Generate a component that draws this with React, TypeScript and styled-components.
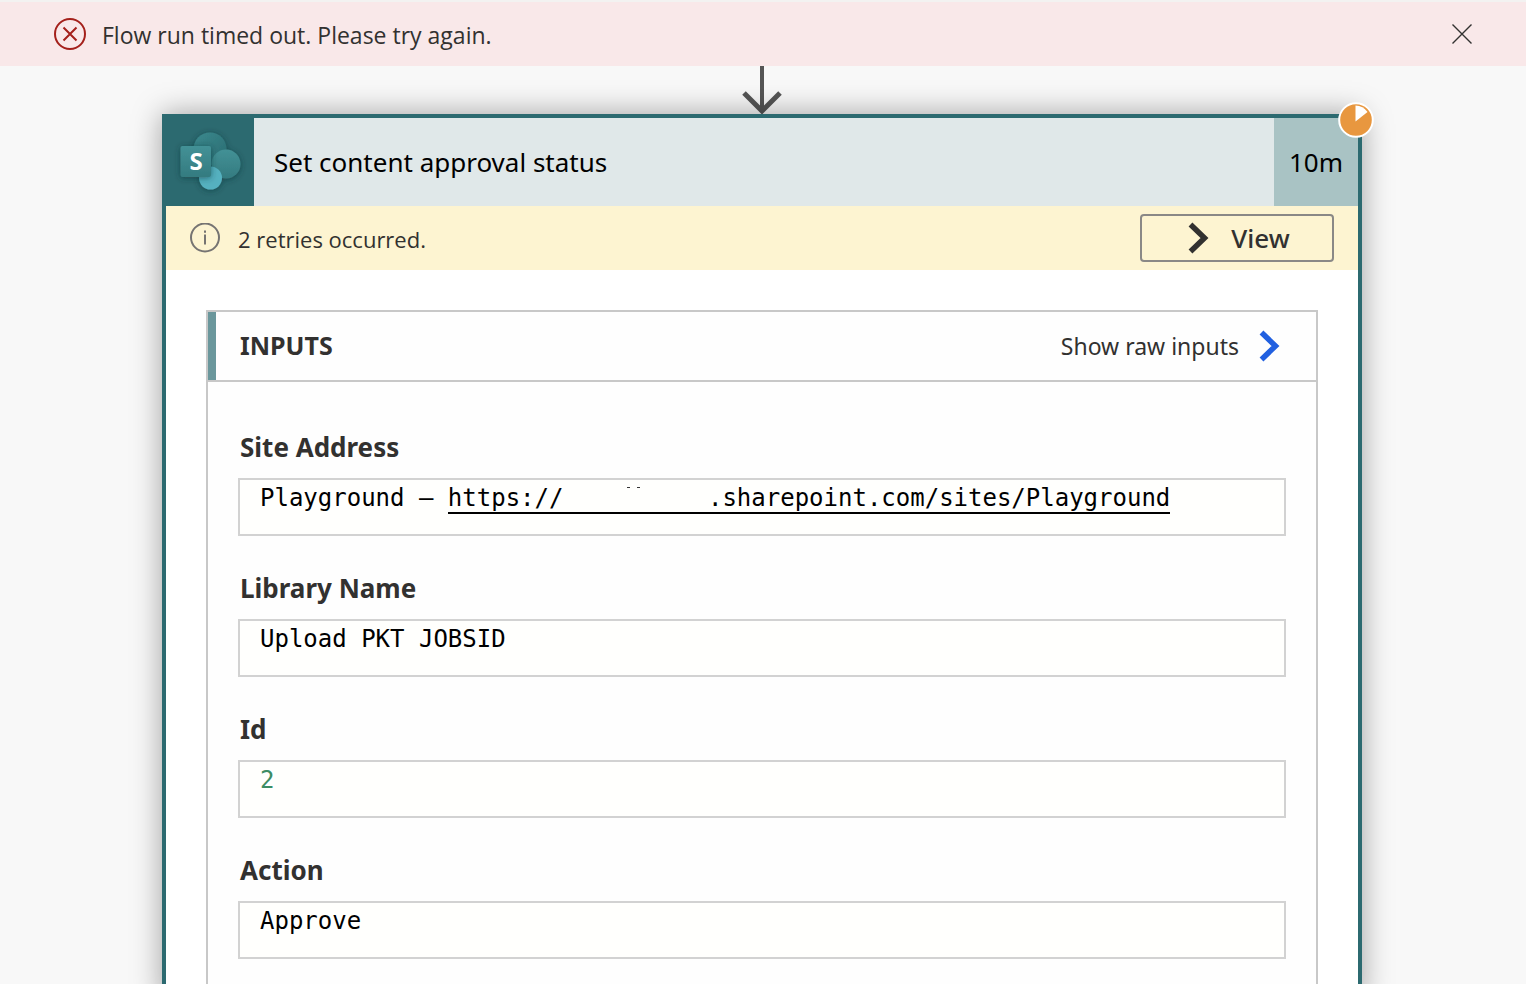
import React from 'react';
import styled, { createGlobalStyle } from 'styled-components';

const teal = '#2c6a70';
const sans = '"Noto Sans", "Open Sans", sans-serif';
const ui = '"Open Sans", "Noto Sans", sans-serif';
const mono = '"DejaVu Sans Mono", monospace';

const GlobalStyle = createGlobalStyle`
  * { box-sizing: border-box; }
  body { margin: 0; background: #f8f8f8; color: #323130; font-family: ${sans}; }
  button { font: inherit; color: inherit; background: none; border: 0; padding: 0; cursor: pointer; }
  svg { display: block; flex: none; }
`;

const Page = styled.div`
  height: 100vh;
  display: flex;
  flex-direction: column;
  overflow: hidden;
`;

const Banner = styled.div`
  flex: none;
  height: 66px;
  display: flex;
  align-items: center;
  gap: 16px;
  padding: 0 50px 0 54px;
  border-top: 2px solid #f3f2f1;
  background: #f9e8e9;
`;

const BannerText = styled.p`
  flex: 1;
  margin: 0;
  padding-top: 2px;
  font: 23px/32px ${ui};
`;

const CloseButton = styled.button`
  padding: 4px;
`;

const Canvas = styled.main`
  flex: 1;
  min-height: 0;
  display: flex;
  flex-direction: column;
  padding: 0 164px 0 162px;
`;

const ArrowRow = styled.div`
  flex: none;
  height: 48px;
  display: flex;
  justify-content: center;
`;

const Card = styled.article`
  flex: 1 0 auto;
  position: relative;
  border: 4px solid ${teal};
  border-bottom: 0;
  background: #fff;
  box-shadow: 0 0 28px rgba(0, 0, 0, 0.36);
`;

const StatusBadge = styled.div`
  position: absolute;
  top: -16px;
  right: -16px;
`;

const CardHeader = styled.header`
  display: flex;
  height: 88px;
  background: #e0e8e9;
`;

const LogoTile = styled.div`
  width: 88px;
  background: ${teal};
`;

const CardTitle = styled.h1`
  flex: 1;
  margin: 0;
  padding-left: 20px;
  font-size: 26px;
  font-weight: 400;
  line-height: 88px;
  color: #000;
`;

const Duration = styled.div`
  width: 84px;
  text-align: center;
  font-size: 26px;
  line-height: 88px;
  color: #000;
  background: #a9c3c4;
`;

const RetryBar = styled.div`
  display: flex;
  align-items: center;
  height: 64px;
  padding: 0 24px;
  gap: 18px;
  background: #fdf4d1;
`;

const RetryText = styled.p`
  flex: 1;
  margin: 0;
  padding-top: 2px;
  font: 22px/32px ${ui};
`;

const ViewButton = styled.button`
  && {
    display: flex;
    align-items: center;
    justify-content: center;
    gap: 22px;
    width: 194px;
    height: 48px;
    padding-left: 4px;
    border: 2px solid #8a8886;
    border-radius: 4px;
    font: 500 26px/36px ${sans};
  }
`;

const Section = styled.section`
  margin: 40px 40px 0;
  border: 2px solid #c8c8c8;
  background: #fefefe;
  padding-bottom: 40px;
`;

const SectionHeader = styled.div`
  display: flex;
  align-items: center;
  height: 70px;
  padding-right: 36px;
  border-bottom: 2px solid #c8c8c8;
`;

const Accent = styled.div`
  align-self: stretch;
  width: 8px;
  background: #6b979c;
`;

const SectionTitle = styled.h2`
  flex: 1;
  margin: 0;
  padding: 0 0 2px 24px;
  font-size: 25px;
  line-height: 36px;
`;

const RawButton = styled.button`
  && {
    display: flex;
    align-items: center;
    gap: 20px;
    font-size: 23px;
    line-height: 36px;
  }
`;

const Fields = styled.div`
  display: flex;
  flex-direction: column;
  gap: 34px;
  padding: 47px 30px 0;
`;

const Field = styled.div`
  display: flex;
  flex-direction: column;
  gap: 13px;
`;

const Label = styled.label`
  padding-left: 2px;
  font-size: 26px;
  font-weight: 700;
  line-height: 36px;
`;

const ValueInput = styled.input<{ $numeric?: boolean }>`
  width: 100%;
  height: 58px;
  padding: 0 20px 18px;
  border: 2px solid #d2d2d2;
  border-radius: 0;
  background: #fffffd;
  font: 24px/36px ${mono};
  color: ${(p) => (p.$numeric ? '#3c8c64' : '#000')};
`;

const ValueBox = styled.div`
  height: 58px;
  padding: 0 20px 18px;
  border: 2px solid #d2d2d2;
  background: #fffffd;
  font: 24px/36px ${mono};
  color: #000;
  white-space: pre;
`;

const SiteLink = styled.a`
  color: inherit;
  text-decoration: none;
  border-bottom: 2px solid #000;
`;

const Tenant = styled.span`
  position: relative;
`;

const TenantMarks = styled.svg`
  position: absolute;
  left: 64px;
  top: 3px;
`;

const Chevron = ({ color }: { color: string }) => (
  <svg width="21" height="32" viewBox="0 0 21 32" fill="none" stroke={color} strokeWidth="5.500">
    <path d="M2.500 2.500 16.500 16 2.500 29.500" />
  </svg>
);

const SharePointLogo = () => (
  <svg width="88" height="88" viewBox="0 0 88 88" role="img" aria-label="SharePoint">
    <defs>
      <linearGradient id="back" x1="0" y1="0" x2="1" y2="1">
        <stop offset="0" stopColor="#3c8a8f" />
        <stop offset="1" stopColor="#286a6f" />
      </linearGradient>
      <linearGradient id="side" x1="0" y1="0" x2="0" y2="1">
        <stop offset="0" stopColor="#439196" />
        <stop offset="1" stopColor="#347b80" />
      </linearGradient>
      <filter id="glow" x="-30%" y="-30%" width="160%" height="160%">
        <feDropShadow dx="0" dy="1" stdDeviation="3" floodColor="#0c3538" floodOpacity="0.6" />
      </filter>
    </defs>
    <g filter="url(#glow)">
      <circle cx="44" cy="31" r="16.500" fill="url(#back)" />
      <circle cx="60" cy="46" r="14.500" fill="url(#side)" />
      <circle cx="44.500" cy="60" r="11.500" fill="#55b1c0" />
    </g>
    <g filter="url(#glow)">
      <rect x="14.500" y="28" width="30.500" height="31" rx="2" fill="url(#side)" />
    </g>
    <text x="30" y="52" textAnchor="middle" fontFamily="Noto Sans" fontWeight="700" fontSize="24" fill="#fff">
      S
    </text>
  </svg>
);

const textFields = [
  { id: 'library', label: 'Library Name', value: 'Upload PKT JOBSID' },
  { id: 'item', label: 'Id', value: '2', numeric: true },
  { id: 'action', label: 'Action', value: 'Approve' },
];

export default function App() {
  return (
    <Page>
      <GlobalStyle />
      <Banner role="alert">
        <svg width="32" height="32" viewBox="0 0 32 32" fill="none" stroke="#a4201b" strokeWidth="2">
          <circle cx="16" cy="16" r="15" />
          <path d="M9.500 9.500l13 13M22.500 9.500l-13 13" />
        </svg>
        <BannerText>Flow run timed out. Please try again.</BannerText>
        <CloseButton aria-label="Dismiss">
          <svg width="20" height="20" viewBox="0 0 20 20" fill="none" stroke="#323130" strokeWidth="1.400">
            <path d="M.5.5l19 19M19.500.5l-19 19" />
          </svg>
        </CloseButton>
      </Banner>
      <Canvas>
        <ArrowRow>
          <svg width="42" height="48" viewBox="0 0 42 48" fill="none" stroke="#555" strokeWidth="4">
            <path d="M21 0v45" />
            <path d="M3 27 21 45 39 27" strokeWidth="5" />
          </svg>
        </ArrowRow>
        <Card>
          <CardHeader>
            <LogoTile>
              <SharePointLogo />
            </LogoTile>
            <CardTitle>Set content approval status</CardTitle>
            <Duration>10m</Duration>
          </CardHeader>
          <RetryBar>
            <svg width="30" height="30" viewBox="0 0 30 30" fill="none" stroke="#767472" strokeWidth="2">
              <circle cx="15" cy="14.500" r="14" />
              <path d="M15 11.500v10M15 7.500v2.200" />
            </svg>
            <RetryText>2 retries occurred.</RetryText>
            <ViewButton>
              <Chevron color="#323130" />
              View
            </ViewButton>
          </RetryBar>
          <Section>
            <SectionHeader>
              <Accent />
              <SectionTitle>INPUTS</SectionTitle>
              <RawButton>
                Show raw inputs
                <Chevron color="#2160e0" />
              </RawButton>
            </SectionHeader>
            <Fields>
              <Field>
                <Label as="span">Site Address</Label>
                <ValueBox>
                  {'Playground – '}
                  <SiteLink href="#playground">
                    https://
                    <Tenant>
                      {'\u00a0'.repeat(10)}
                      <TenantMarks width="15" height="2" viewBox="0 0 15 2" fill="#333">
                        <path d="M0 0h3v1H0zM10 0h3v1h-3z" />
                      </TenantMarks>
                    </Tenant>
                    .sharepoint.com/sites/Playground
                  </SiteLink>
                </ValueBox>
              </Field>
              {textFields.map((f) => (
                <Field key={f.id}>
                  <Label htmlFor={f.id}>{f.label}</Label>
                  <ValueInput id={f.id} defaultValue={f.value} readOnly $numeric={f.numeric} />
                </Field>
              ))}
            </Fields>
          </Section>
          <StatusBadge>
            <svg width="36" height="36" viewBox="0 0 36 36" role="img" aria-label="Timed out">
              <circle cx="18" cy="18" r="16.800" fill="#e8973f" stroke="#fff" strokeWidth="2" />
              <path d="M17.500 19.500V3.500A15 15 0 0 1 29.500 10z" fill="#fff" />
            </svg>
          </StatusBadge>
        </Card>
      </Canvas>
    </Page>
  );
}
